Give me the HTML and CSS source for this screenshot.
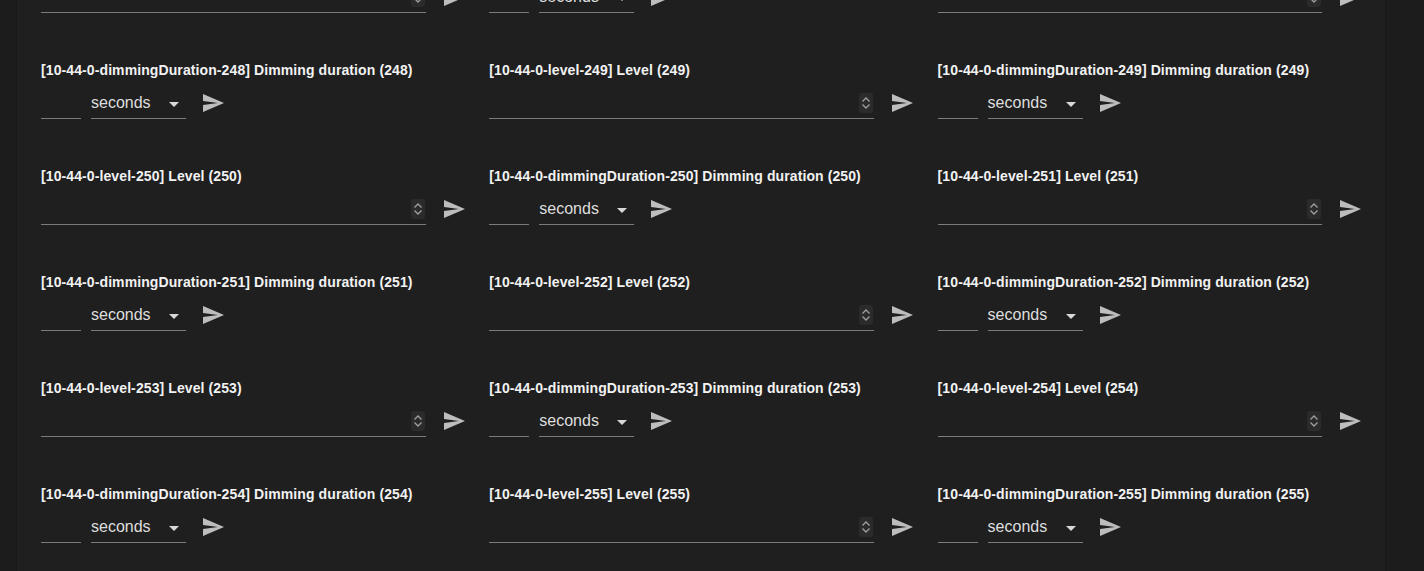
FILE: index.html
```html
<!DOCTYPE html>
<html lang="en">
<head>
  <meta charset="UTF-8">
  <title>Node 10 - Endpoint 44 values</title>
  <link rel="stylesheet" href="styles.css">
</head>
<body>
  <div class="panel">
    <div class="grid">

      <div class="cell">
        <div class="label">[10-44-0-level-247] Level (247)</div>
        <div class="controls">
          <div class="number"><input class="field level" type="number"><span class="spin"><svg viewBox="0 0 14 20"><rect width="14" height="20" rx="3"/><path d="M3.5 8.5l3.5-3.5 3.5 3.5M3.5 11.5l3.5 3.5 3.5-3.5"/></svg></span></div>
          <button class="send"><svg viewBox="0 0 24 24"><path d="M2.01 21L23 12 2.01 3 2 10l15 2-15 2z"/></svg></button>
        </div>
      </div>
      <div class="cell">
        <div class="label">[10-44-0-dimmingDuration-247] Dimming duration (247)</div>
        <div class="controls">
          <input class="field duration" type="text">
          <div class="select"><span>seconds</span><svg viewBox="0 0 24 24"><path d="M7 10l5 5 5-5z"/></svg></div>
          <button class="send"><svg viewBox="0 0 24 24"><path d="M2.01 21L23 12 2.01 3 2 10l15 2-15 2z"/></svg></button>
        </div>
      </div>
      <div class="cell">
        <div class="label">[10-44-0-level-248] Level (248)</div>
        <div class="controls">
          <div class="number"><input class="field level" type="number"><span class="spin"><svg viewBox="0 0 14 20"><rect width="14" height="20" rx="3"/><path d="M3.5 8.5l3.5-3.5 3.5 3.5M3.5 11.5l3.5 3.5 3.5-3.5"/></svg></span></div>
          <button class="send"><svg viewBox="0 0 24 24"><path d="M2.01 21L23 12 2.01 3 2 10l15 2-15 2z"/></svg></button>
        </div>
      </div>

      <div class="cell">
        <div class="label">[10-44-0-dimmingDuration-248] Dimming duration (248)</div>
        <div class="controls">
          <input class="field duration" type="text">
          <div class="select"><span>seconds</span><svg viewBox="0 0 24 24"><path d="M7 10l5 5 5-5z"/></svg></div>
          <button class="send"><svg viewBox="0 0 24 24"><path d="M2.01 21L23 12 2.01 3 2 10l15 2-15 2z"/></svg></button>
        </div>
      </div>
      <div class="cell">
        <div class="label">[10-44-0-level-249] Level (249)</div>
        <div class="controls">
          <div class="number"><input class="field level" type="number"><span class="spin"><svg viewBox="0 0 14 20"><rect width="14" height="20" rx="3"/><path d="M3.5 8.5l3.5-3.5 3.5 3.5M3.5 11.5l3.5 3.5 3.5-3.5"/></svg></span></div>
          <button class="send"><svg viewBox="0 0 24 24"><path d="M2.01 21L23 12 2.01 3 2 10l15 2-15 2z"/></svg></button>
        </div>
      </div>
      <div class="cell">
        <div class="label">[10-44-0-dimmingDuration-249] Dimming duration (249)</div>
        <div class="controls">
          <input class="field duration" type="text">
          <div class="select"><span>seconds</span><svg viewBox="0 0 24 24"><path d="M7 10l5 5 5-5z"/></svg></div>
          <button class="send"><svg viewBox="0 0 24 24"><path d="M2.01 21L23 12 2.01 3 2 10l15 2-15 2z"/></svg></button>
        </div>
      </div>

      <div class="cell">
        <div class="label">[10-44-0-level-250] Level (250)</div>
        <div class="controls">
          <div class="number"><input class="field level" type="number"><span class="spin"><svg viewBox="0 0 14 20"><rect width="14" height="20" rx="3"/><path d="M3.5 8.5l3.5-3.5 3.5 3.5M3.5 11.5l3.5 3.5 3.5-3.5"/></svg></span></div>
          <button class="send"><svg viewBox="0 0 24 24"><path d="M2.01 21L23 12 2.01 3 2 10l15 2-15 2z"/></svg></button>
        </div>
      </div>
      <div class="cell">
        <div class="label">[10-44-0-dimmingDuration-250] Dimming duration (250)</div>
        <div class="controls">
          <input class="field duration" type="text">
          <div class="select"><span>seconds</span><svg viewBox="0 0 24 24"><path d="M7 10l5 5 5-5z"/></svg></div>
          <button class="send"><svg viewBox="0 0 24 24"><path d="M2.01 21L23 12 2.01 3 2 10l15 2-15 2z"/></svg></button>
        </div>
      </div>
      <div class="cell">
        <div class="label">[10-44-0-level-251] Level (251)</div>
        <div class="controls">
          <div class="number"><input class="field level" type="number"><span class="spin"><svg viewBox="0 0 14 20"><rect width="14" height="20" rx="3"/><path d="M3.5 8.5l3.5-3.5 3.5 3.5M3.5 11.5l3.5 3.5 3.5-3.5"/></svg></span></div>
          <button class="send"><svg viewBox="0 0 24 24"><path d="M2.01 21L23 12 2.01 3 2 10l15 2-15 2z"/></svg></button>
        </div>
      </div>

      <div class="cell">
        <div class="label">[10-44-0-dimmingDuration-251] Dimming duration (251)</div>
        <div class="controls">
          <input class="field duration" type="text">
          <div class="select"><span>seconds</span><svg viewBox="0 0 24 24"><path d="M7 10l5 5 5-5z"/></svg></div>
          <button class="send"><svg viewBox="0 0 24 24"><path d="M2.01 21L23 12 2.01 3 2 10l15 2-15 2z"/></svg></button>
        </div>
      </div>
      <div class="cell">
        <div class="label">[10-44-0-level-252] Level (252)</div>
        <div class="controls">
          <div class="number"><input class="field level" type="number"><span class="spin"><svg viewBox="0 0 14 20"><rect width="14" height="20" rx="3"/><path d="M3.5 8.5l3.5-3.5 3.5 3.5M3.5 11.5l3.5 3.5 3.5-3.5"/></svg></span></div>
          <button class="send"><svg viewBox="0 0 24 24"><path d="M2.01 21L23 12 2.01 3 2 10l15 2-15 2z"/></svg></button>
        </div>
      </div>
      <div class="cell">
        <div class="label">[10-44-0-dimmingDuration-252] Dimming duration (252)</div>
        <div class="controls">
          <input class="field duration" type="text">
          <div class="select"><span>seconds</span><svg viewBox="0 0 24 24"><path d="M7 10l5 5 5-5z"/></svg></div>
          <button class="send"><svg viewBox="0 0 24 24"><path d="M2.01 21L23 12 2.01 3 2 10l15 2-15 2z"/></svg></button>
        </div>
      </div>

      <div class="cell">
        <div class="label">[10-44-0-level-253] Level (253)</div>
        <div class="controls">
          <div class="number"><input class="field level" type="number"><span class="spin"><svg viewBox="0 0 14 20"><rect width="14" height="20" rx="3"/><path d="M3.5 8.5l3.5-3.5 3.5 3.5M3.5 11.5l3.5 3.5 3.5-3.5"/></svg></span></div>
          <button class="send"><svg viewBox="0 0 24 24"><path d="M2.01 21L23 12 2.01 3 2 10l15 2-15 2z"/></svg></button>
        </div>
      </div>
      <div class="cell">
        <div class="label">[10-44-0-dimmingDuration-253] Dimming duration (253)</div>
        <div class="controls">
          <input class="field duration" type="text">
          <div class="select"><span>seconds</span><svg viewBox="0 0 24 24"><path d="M7 10l5 5 5-5z"/></svg></div>
          <button class="send"><svg viewBox="0 0 24 24"><path d="M2.01 21L23 12 2.01 3 2 10l15 2-15 2z"/></svg></button>
        </div>
      </div>
      <div class="cell">
        <div class="label">[10-44-0-level-254] Level (254)</div>
        <div class="controls">
          <div class="number"><input class="field level" type="number"><span class="spin"><svg viewBox="0 0 14 20"><rect width="14" height="20" rx="3"/><path d="M3.5 8.5l3.5-3.5 3.5 3.5M3.5 11.5l3.5 3.5 3.5-3.5"/></svg></span></div>
          <button class="send"><svg viewBox="0 0 24 24"><path d="M2.01 21L23 12 2.01 3 2 10l15 2-15 2z"/></svg></button>
        </div>
      </div>

      <div class="cell">
        <div class="label">[10-44-0-dimmingDuration-254] Dimming duration (254)</div>
        <div class="controls">
          <input class="field duration" type="text">
          <div class="select"><span>seconds</span><svg viewBox="0 0 24 24"><path d="M7 10l5 5 5-5z"/></svg></div>
          <button class="send"><svg viewBox="0 0 24 24"><path d="M2.01 21L23 12 2.01 3 2 10l15 2-15 2z"/></svg></button>
        </div>
      </div>
      <div class="cell">
        <div class="label">[10-44-0-level-255] Level (255)</div>
        <div class="controls">
          <div class="number"><input class="field level" type="number"><span class="spin"><svg viewBox="0 0 14 20"><rect width="14" height="20" rx="3"/><path d="M3.5 8.5l3.5-3.5 3.5 3.5M3.5 11.5l3.5 3.5 3.5-3.5"/></svg></span></div>
          <button class="send"><svg viewBox="0 0 24 24"><path d="M2.01 21L23 12 2.01 3 2 10l15 2-15 2z"/></svg></button>
        </div>
      </div>
      <div class="cell">
        <div class="label">[10-44-0-dimmingDuration-255] Dimming duration (255)</div>
        <div class="controls">
          <input class="field duration" type="text">
          <div class="select"><span>seconds</span><svg viewBox="0 0 24 24"><path d="M7 10l5 5 5-5z"/></svg></div>
          <button class="send"><svg viewBox="0 0 24 24"><path d="M2.01 21L23 12 2.01 3 2 10l15 2-15 2z"/></svg></button>
        </div>
      </div>

    </div>
  </div>
</body>
</html>
```

FILE: styles.css
```css
html, body {
  margin: 0;
  background: #1c1c1c;
  color-scheme: dark;
  font-family: 'Liberation Sans', Arial, sans-serif;
  overflow: hidden;
}
/* page is scrolled: first row only half visible */
.panel {
  margin: -52px 0 0 16px;
  padding-left: 24px;
  box-sizing: border-box;
  width: 1370px;
  background: #1f1f1f;
  border-left: 1px solid #191919;
  border-right: 1px solid #191919;
}
.grid {
  display: grid;
  grid-template-columns: repeat(3, 448.3px);
}
.cell {
  padding: 8px 0 41px;
}
.label {
  font-size: 14px;
  font-weight: bold;
  line-height: 16px;
  letter-spacing: 0.1px;
  color: #f2f2f2;
  margin-bottom: 12px;
  white-space: nowrap;
}
.controls {
  display: flex;
  align-items: flex-end;
}
.field {
  font-family: inherit;
  font-size: 16px;
  line-height: 19px;
  height: 29px;
  padding: 4px 0 5px;
  box-sizing: border-box;
  margin: 0;
  background: transparent;
  color: #e0e0e0;
  border: none;
  border-bottom: 1px solid #7b7b7b;
  outline: none;
}
.field::-webkit-inner-spin-button {
  display: none;
}
.number {
  position: relative;
}
.field.level {
  display: block;
  width: 384.5px;
}
.field.duration {
  width: 40px;
}
.spin {
  position: absolute;
  right: 1px;
  top: 3px;
  width: 14px;
  height: 20px;
}
.spin svg {
  display: block;
  width: 14px;
  height: 20px;
}
.spin rect {
  fill: #2b2b2b;
}
.spin path {
  fill: none;
  stroke: #a0a0a0;
  stroke-width: 1.3;
}
.select {
  position: relative;
  width: 95px;
  height: 29px;
  margin-left: 10px;
  padding: 3px 0 6px;
  box-sizing: border-box;
  border-bottom: 1px solid #7b7b7b;
  font-size: 16px;
  line-height: 19px;
  color: #dedede;
}
.select svg {
  position: absolute;
  right: 0;
  top: 2px;
  width: 24px;
  height: 24px;
  fill: #d8d8d8;
}
.send {
  margin: 0 0 4px 16px;
  padding: 0;
  width: 24px;
  height: 24px;
  border: none;
  background: none;
  cursor: pointer;
}
.select + .send {
  margin-left: 15px;
}
.send svg {
  display: block;
  width: 24px;
  height: 24px;
  fill: #bdbdbd;
}
```
